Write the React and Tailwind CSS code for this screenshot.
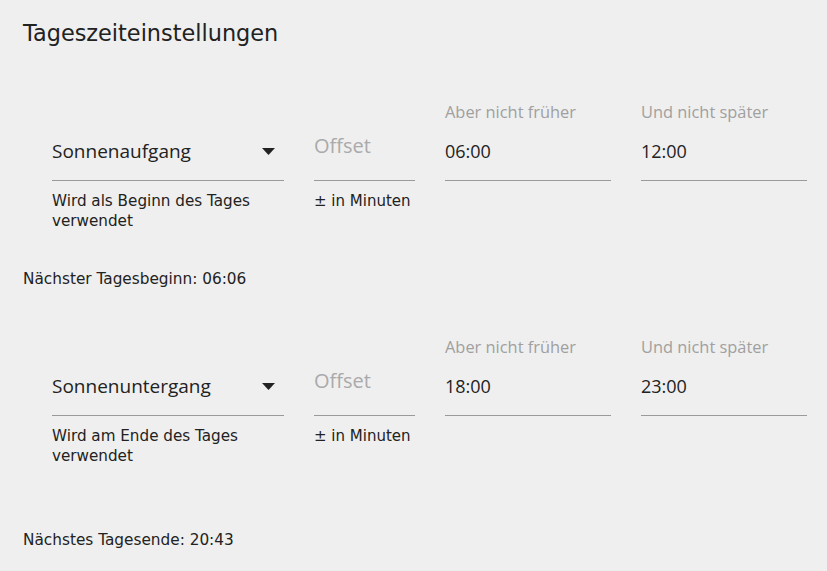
import React from "react";

const dv = { fontFamily: '"DejaVu Sans", Verdana, sans-serif' };
const os = { fontFamily: '"Open Sans", "Segoe UI", sans-serif' };

function Arrow() {
  return (
    <svg width="13" height="7" viewBox="0 0 13 7" className="block">
      <path d="M0 0 L13 0 L6.5 7 Z" fill="#222" />
    </svg>
  );
}

function TimeField({ label, value }) {
  return (
    <div className="flex flex-col">
      <div className="h-[20px] text-[16.4px] leading-[20px] text-[#a0a0a0] whitespace-nowrap" style={os}>
        {label}
      </div>
      <div className="mt-[11px] h-[48px] border-b border-[#9a9a9a] text-[18px] leading-[36px] text-[#222]" style={os}>
        {value}
      </div>
    </div>
  );
}

function Row({ choice, helper1, helper2, from, to }) {
  return (
    <div className="flex pl-[52px] pr-[20px] gap-[30px]">
      <div className="w-[232px] flex flex-col">
        <div className="h-[20px]" />
        <div className="mt-[11px] h-[48px] border-b border-[#9a9a9a] flex items-start justify-between pr-[9px]">
          <span className="text-[19px] leading-[36px] text-[#222]" style={os}>{choice}</span>
          <span className="mt-[15px]"><Arrow /></span>
        </div>
        <div className="mt-[10px] text-[15.2px] leading-[20px] text-[#222]" style={dv}>
          <div>{helper1}</div>
          <div>{helper2}</div>
        </div>
      </div>
      <div className="w-[101px] flex flex-col">
        <div className="h-[20px]" />
        <div className="mt-[11px] h-[48px] border-b border-[#9a9a9a] text-[20px] leading-[26px] text-[#aaaaaa]" style={os}>
          Offset
        </div>
        <div className="mt-[10px] text-[15px] leading-[20px] text-[#222] whitespace-nowrap" style={dv}>
          ± in Minuten
        </div>
      </div>
      <div className="w-[166px]">
        <TimeField label="Aber nicht früher" value={from} />
      </div>
      <div className="w-[166px]">
        <TimeField label="Und nicht später" value={to} />
      </div>
    </div>
  );
}

export default function App() {
  return (
    <div className="w-full h-[571px] bg-[#efefef] overflow-hidden">
      <div className="pt-[18px] pl-[23px] text-[22.4px] leading-[30px] text-[#222]" style={dv}>
        Tageszeiteinstellungen
      </div>
      <div className="mt-[54px]">
        <Row
          choice="Sonnenaufgang"
          helper1="Wird als Beginn des Tages"
          helper2="verwendet"
          from="06:00"
          to="12:00"
        />
      </div>
      <div className="mt-[38px] pl-[23px] text-[15.3px] leading-[20px] text-[#222]" style={dv}>
        Nächster Tagesbeginn: 06:06
      </div>
      <div className="mt-[48px]">
        <Row
          choice="Sonnenuntergang"
          helper1="Wird am Ende des Tages"
          helper2="verwendet"
          from="18:00"
          to="23:00"
        />
      </div>
      <div className="mt-[64px] pl-[23px] text-[15.3px] leading-[20px] text-[#222]" style={dv}>
        Nächstes Tagesende: 20:43
      </div>
    </div>
  );
}
